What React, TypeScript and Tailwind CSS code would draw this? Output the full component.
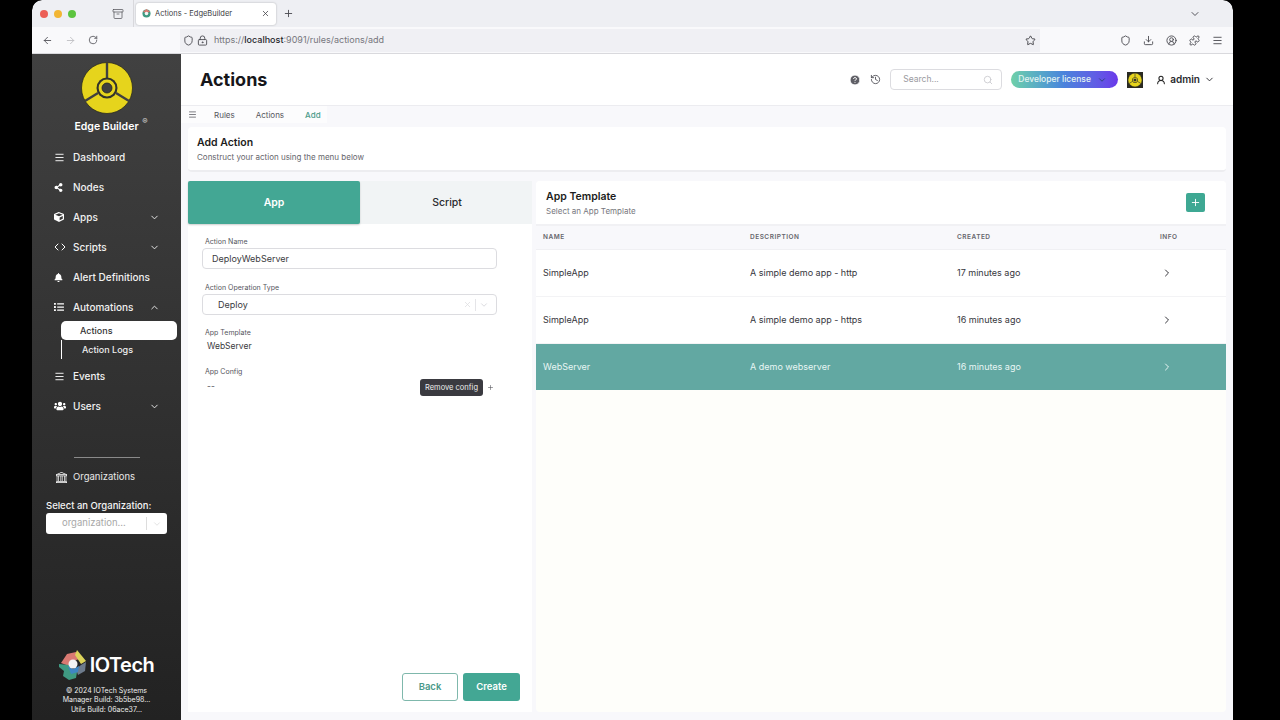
import { ArrowLeft, ArrowRight, RotateCw, Shield, LockKeyhole, Star, Download, CircleUserRound, Puzzle, Menu, ChevronDown, ChevronUp, ChevronRight, X, Plus, Search, History, CircleHelp, Archive, UserRound, Code } from "lucide-react";
import { FaBell, FaCube, FaList, FaUsers, FaShareAlt } from "react-icons/fa";
import { BsBank } from "react-icons/bs";

function EdgeLogo({ size, bg }: { size: number; bg: string }) {
  return (
    <svg width={size} height={size} viewBox="0 0 52 52">
      <circle cx="26" cy="26" r="25.5" fill="#e6d41c" stroke="#2c2c20" strokeWidth="0.8" />
      <path d="M26 1v15M17 31L4 39M35 31l13 8" stroke={bg} strokeWidth="2.4" />
      <circle cx="26" cy="26" r="10.5" fill="#33332a" />
      <circle cx="26" cy="26" r="8.4" fill="#e6d41c" />
      <circle cx="26" cy="26" r="5" fill={bg} stroke="#222" strokeWidth="0.8" />
    </svg>
  );
}

function IOTechMark() {
  return (
    <svg width="31" height="31" viewBox="0 0 31 31">
      <path d="M3 14L9 5l9-2 3 7-8 3-2 4z" fill="#d97a72" />
      <path d="M19 1l9 11-5 3-6-9z" fill="#dcd35a" />
      <path d="M28 13l-1 9-7 4-2-6 5-4z" fill="#6d7b8c" />
      <path d="M1 15l10 1 2 5 6 2-1 6-7 2-6-4 1-5-5-4z" fill="#3f9a82" />
      <path d="M10 17l5 3 6-3-1 6-7 2z" fill="#3f86c4" />
      <circle cx="15" cy="15" r="4.5" fill="#f4f4f4" />
    </svg>
  );
}

function NavItem({ icon, label, arrow }: { icon: React.ReactNode; label: string; arrow?: "down" | "up" }) {
  return (
    <div className="h-[30px] flex items-center pl-[22px] pr-[21px] text-[#f1f1f1] text-[10px]">
      <span className="w-[18px] flex justify-start text-white">{icon}</span>
      <span className="ml-[1px] flex-1 font-medium">{label}</span>
      {arrow === "down" && <ChevronDown size={11} />}
      {arrow === "up" && <ChevronUp size={11} />}
    </div>
  );
}

function BrowserChrome() {
  return (
    <div className="shrink-0">
      <div className="h-[27px] bg-[#eeeff3] rounded-t-[10px] flex items-center">
        <div className="flex items-center gap-[6px] pl-[8px]">
          <span className="w-[8px] h-[8px] rounded-full bg-[#ec5f57]" />
          <span className="w-[8px] h-[8px] rounded-full bg-[#f2b634]" />
          <span className="w-[8px] h-[8px] rounded-full bg-[#5cc43f]" />
        </div>
        <Archive size={12} className="ml-[36px] text-[#55555c]" strokeWidth={1.5} />
        <div className="ml-[9px] h-full w-px bg-[#d8d8dc]" />
        <div className="ml-[2px] w-[140px] h-[22px] bg-white rounded-[3px] shadow-[0_0_2px_rgba(0,0,0,0.3)] flex items-center pl-[6px] pr-[6px] text-[7.5px] text-[#3c3c42]">
          <svg width="9" height="9" viewBox="0 0 10 10"><circle cx="5" cy="5" r="4.5" fill="#3f9a82" /><path d="M1 3l4-3 4 3-2 1H3z" fill="#d97a72" /><circle cx="5" cy="5" r="2" fill="#f4f4f4" /></svg>
          <span className="ml-[4px] flex-1">Actions - EdgeBuilder</span>
          <X size={9} />
        </div>
        <Plus size={11} className="ml-[7px] text-[#4c4c52]" />
        <div className="flex-1" />
        <ChevronDown size={12} className="mr-[32px] text-[#55555c]" />
      </div>
      <div className="h-[27px] bg-[#f9f9fb] border-b border-[#d9d9dd] flex items-center">
        <ArrowLeft size={11} className="ml-[10px] text-[#55555c]" />
        <ArrowRight size={11} className="ml-[12px] text-[#c0c0c4]" />
        <RotateCw size={10} className="ml-[12px] text-[#55555c]" />
        <div className="ml-[82px] w-[860px] h-[23px] bg-[#f0f0f4] flex items-center text-[9px] text-[#77777d]">
          <Shield size={11} className="ml-[3px] text-[#4e4e54]" />
          <LockKeyhole size={11} className="ml-[3px] text-[#4e4e54]" />
          <span className="ml-[6px] flex-1">https://<span className="text-[#26262b] font-medium">localhost</span>:9091/rules/actions/add</span>
          <Star size={11} className="mr-[4px] text-[#3f3f45]" />
        </div>
        <div className="flex items-center gap-[12px] ml-[80px] text-[#4c4c52]">
          <Shield size={11} />
          <Download size={11} />
          <CircleUserRound size={11} />
          <Puzzle size={11} />
          <Menu size={11} />
        </div>
      </div>
    </div>
  );
}

function Sidebar() {
  return (
    <aside className="w-[149px] shrink-0 flex flex-col bg-gradient-to-b from-[#414141] to-[#222222] font-['Inter',sans-serif]">
      <div className="flex flex-col items-center pt-[8px] h-[88px]">
        <EdgeLogo size={52} bg="#404040" />
        <div className="relative mt-[6px] text-[10.5px] font-semibold text-white leading-[13px]">
          Edge Builder
          <span className="absolute -right-[9px] -top-[5px] text-[8px] text-[#cfcfcf]">®</span>
        </div>
      </div>
      <NavItem icon={<Menu size={11} />} label="Dashboard" />
      <NavItem icon={<FaShareAlt size={9} />} label="Nodes" />
      <NavItem icon={<FaCube size={10} />} label="Apps" arrow="down" />
      <NavItem icon={<Code size={12} />} label="Scripts" arrow="down" />
      <NavItem icon={<FaBell size={9} />} label="Alert Definitions" />
      <NavItem icon={<FaList size={10} />} label="Automations" arrow="up" />
      <div className="ml-[29px] mr-[4px] h-[19px] mt-[-1px] bg-white rounded-[5px] flex items-center pl-[19px] text-[9px] font-medium text-[#333]">Actions</div>
      <div className="ml-[29px] h-[19px] border-l border-white flex items-center pl-[20px] text-[9px] font-medium text-[#eee]">Action Logs</div>
      <div className="mt-[2px]">
        <NavItem icon={<Menu size={11} />} label="Events" />
        <NavItem icon={<FaUsers size={12} />} label="Users" arrow="down" />
      </div>
      <div className="mt-[36px] mx-auto w-[66px] h-px bg-[#8a8a8a]" />
      <div className="mt-[12px] h-[14px] flex items-center pl-[24px] text-[9.5px] text-[#e8e8e8]">
        <BsBank size={11} className="text-white" />
        <span className="ml-[6px]">Organizations</span>
      </div>
      <div className="mt-[16px] pl-[14px] text-[9.5px] font-medium text-[#f4f4f4] leading-[12px]">Select an Organization:</div>
      <div className="mt-[1px] mx-[14px] h-[21px] bg-white rounded-[3px] flex items-center pl-[16px] text-[9.5px] text-[#a8a8a8]">
        <span className="flex-1">organization...</span>
        <span className="w-px h-[13px] bg-[#ddd]" />
        <ChevronDown size={10} className="mx-[5px] text-[#ddd]" />
      </div>
      <div className="mt-auto pb-[6px] flex flex-col items-center">
        <div className="flex items-center gap-[1px] pr-[1px]">
          <IOTechMark />
          <span className="text-[20px] font-semibold tracking-[-0.5px] text-white leading-[30px]">IOTech</span>
        </div>
        <div className="mt-[6px] text-center text-[7px] leading-[9.3px] text-[#eeeeee]">
          <div>© 2024 IOTech Systems</div>
          <div>Manager Build: 3b5be98...</div>
          <div>Utils Build: 06ace37...</div>
        </div>
      </div>
    </aside>
  );
}

function Header() {
  return (
    <div className="h-[52px] shrink-0 bg-white border-b border-[#ececf0] flex items-center pl-[19px] pr-[18px]">
      <h1 className="text-[18px] font-bold text-[#16161a] flex-1">Actions</h1>
      <CircleHelp size={12} className="text-white fill-[#5f5f66]" />
      <History size={11} className="ml-[9px] text-[#55555c]" />
      <div className="ml-[9px] w-[112px] h-[21px] bg-white border border-[#dcdce0] rounded-[4px] flex items-center pl-[12px] pr-[8px] text-[8.5px] text-[#9a9aa0]">
        <span className="flex-1">Search...</span>
        <Search size={10} className="text-[#c8c8cc]" />
      </div>
      <div className="ml-[9px] w-[107px] h-[17px] rounded-full bg-gradient-to-r from-[#6fd0a8] via-[#4a82dc] to-[#6a38ea] flex items-center pl-[7px] pr-[11px] text-[8.5px] font-medium text-[#e4f4f2]">
        <span className="flex-1">Developer license</span>
        <ChevronDown size={10} className="text-[#27406e]" />
      </div>
      <div className="ml-[9px] w-[16px] h-[16px] bg-[#2a2a22] flex items-center justify-center">
        <EdgeLogo size={14} bg="#333" />
      </div>
      <UserRound size={10} className="ml-[13px] text-[#222]" strokeWidth={2.5} />
      <span className="ml-[4px] text-[10px] font-semibold text-[#2a2a2e]">admin</span>
      <ChevronDown size={11} className="ml-[4px] text-[#2a2a2e]" />
    </div>
  );
}

function FormPanel() {
  return (
    <div className="w-[344px] shrink-0 flex flex-col bg-white">
      <div className="h-[43px] shrink-0 flex bg-[#f1f4f5]">
        <div className="w-[172px] rounded-[2px] bg-[#43a794] shadow-[0_1px_2px_rgba(0,0,0,0.2)] flex items-center justify-center text-[10.5px] font-semibold text-white">App</div>
        <div className="flex-1 flex items-center justify-center text-[10.5px] font-medium text-[#2a2a2e] pl-[2px]">Script</div>
      </div>
      <div className="relative flex-1 flex flex-col pl-[14px] pr-[35px] pt-[13px]">
        <label className="pl-[3px] text-[7px] leading-[9px] text-[#55555c]">Action Name</label>
        <div className="mt-[2px] h-[21px] border border-[#dcdce0] rounded-[4px] flex items-center pl-[9px] text-[9px] text-[#3a3a40]">DeployWebServer</div>
        <label className="mt-[14px] pl-[3px] text-[7px] leading-[9px] text-[#55555c]">Action Operation Type</label>
        <div className="mt-[2px] h-[21px] border border-[#dcdce0] rounded-[4px] flex items-center pl-[15px] pr-[7px] text-[9px] text-[#3a3a40]">
          <span className="flex-1">Deploy</span>
          <X size={9} className="text-[#dedee0]" />
          <span className="mx-[3px] w-px h-[12px] bg-[#e5e5e8]" />
          <ChevronDown size={10} className="text-[#d4d4d8]" />
        </div>
        <label className="mt-[13px] pl-[3px] text-[7px] leading-[9px] text-[#55555c]">App Template</label>
        <div className="mt-[4px] pl-[5px] text-[8.5px] leading-[11px] text-[#3a3a40]">WebServer</div>
        <label className="mt-[15px] pl-[3px] text-[7px] leading-[9px] text-[#55555c]">App Config</label>
        <div className="mt-[5px] pl-[5px] text-[8.5px] leading-[11px] text-[#55555c]">--</div>
        <div className="absolute left-[232px] top-[155px] w-[63px] h-[17px] rounded-[3px] bg-[#3a3a40] flex items-center justify-center text-[7.5px] text-[#eeeeee]">Remove config</div>
        <Plus size={7} className="absolute left-[299px] top-[160px] text-[#55555c]" />
        <div className="mt-auto mb-[11px] flex justify-end gap-[5px] pr-[-23px] mr-[-23px]">
          <button className="w-[56px] h-[28px] rounded-[3px] bg-white border border-[#7fb8ac] text-[9.5px] font-semibold text-[#4a9a8a]">Back</button>
          <button className="w-[57px] h-[28px] rounded-[3px] bg-[#43a794] text-[9.5px] font-semibold text-white">Create</button>
        </div>
      </div>
    </div>
  );
}

const rows = [
  { name: "SimpleApp", desc: "A simple demo app - http", created: "17 minutes ago", h: "h-[47px]" },
  { name: "SimpleApp", desc: "A simple demo app - https", created: "16 minutes ago", h: "h-[47px]" },
  { name: "WebServer", desc: "A demo webserver", created: "16 minutes ago", h: "h-[46px]", on: true },
];

function TemplatePanel() {
  return (
    <div className="flex-1 flex flex-col bg-[#fefefa] rounded-[4px] overflow-hidden">
      <div className="h-[45px] shrink-0 bg-white flex items-center pl-[10px] pr-[21px] border-b-2 border-[#f1f1f4]">
        <div className="flex-1">
          <div className="text-[10.5px] leading-[14px] font-semibold text-[#1c1c20]">App Template</div>
          <div className="mt-[2px] text-[8px] leading-[10px] text-[#77777d]">Select an App Template</div>
        </div>
        <div className="w-[19px] h-[19px] rounded-[2px] bg-[#3ea893] flex items-center justify-center">
          <Plus size={11} className="text-white" />
        </div>
      </div>
      <div className="h-[24px] shrink-0 bg-[#f8f8fb] border-b border-[#f0f0f3] grid grid-cols-[207px_207px_203px_1fr] items-center pl-[7px] text-[6.5px] font-semibold tracking-[0.5px] text-[#66666c]">
        <span>NAME</span>
        <span>DESCRIPTION</span>
        <span>CREATED</span>
        <span>INFO</span>
      </div>
      {rows.map((r, i) => (
        <div key={i} className={`${r.h} shrink-0 grid grid-cols-[207px_207px_203px_1fr] items-center pl-[7px] text-[9px] ${r.on ? "bg-[#62a8a2] text-[#e8f6f4]" : "bg-white border-b border-[#f3f3f5] text-[#36363c]"}`}>
          <span>{r.name}</span>
          <span>{r.desc}</span>
          <span>{r.created}</span>
          <ChevronRight size={12} className="ml-[1px]" />
        </div>
      ))}
    </div>
  );
}

export default function App() {
  return (
    <div className="w-[1280px] h-[720px] bg-black px-[32px] overflow-hidden font-['Inter',sans-serif]">
      <div className="w-[1201px] h-full flex flex-col rounded-t-[10px] overflow-hidden">
        <BrowserChrome />
        <div className="flex-1 flex min-h-0">
          <Sidebar />
          <main className="flex-1 flex flex-col min-w-0 bg-[#f8f8fb]">
            <Header />
            <div className="h-[17px] shrink-0 flex items-center">
              <div className="h-full bg-white/60 flex items-center pl-[7px] pr-[6px] text-[8px] text-[#55555c]">
                <Menu size={9} />
                <span className="ml-[17px]">Rules</span>
                <span className="ml-[21px]">Actions</span>
                <span className="ml-[21px] font-medium text-[#4a9a8a]">Add</span>
              </div>
            </div>
            <div className="mt-[4px] ml-[7px] mr-[7px] h-[45px] shrink-0 bg-white rounded-[4px] border-b-2 border-[#ededf0] pl-[9px] pt-[9px]">
              <div className="text-[10.5px] leading-[14px] font-semibold text-[#1c1c20]">Add Action</div>
              <div className="mt-[2px] text-[8px] leading-[10px] text-[#66666c]">Construct your action using the menu below</div>
            </div>
            <div className="mt-[9px] mb-[8px] ml-[7px] mr-[7px] flex-1 flex gap-[4px] min-h-0">
              <FormPanel />
              <TemplatePanel />
            </div>
          </main>
        </div>
      </div>
    </div>
  );
}
